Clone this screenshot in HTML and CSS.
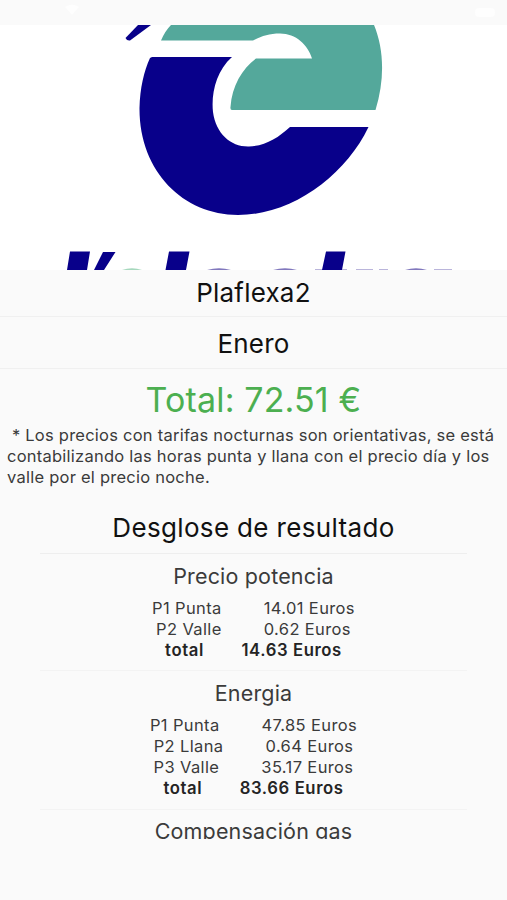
FILE: index.html
```html
<!DOCTYPE html>
<html lang="es">
<head>
<meta charset="utf-8">
<meta name="viewport" content="width=device-width, initial-scale=1">
<title>Plaflexa2</title>
<link rel="stylesheet" href="styles.css">
</head>
<body>
<header class="status-bar">
  <svg width="507" height="25" viewBox="0 0 507 25" fill="#fff" fill-opacity=".7" aria-hidden="true">
    <path d="M65 7q7-5 14 0l-7 8z"/><rect x="475" y="8" width="20" height="9" rx="4"/>
  </svg>
</header>
<main>
  <div class="logo">
    <svg width="507" height="245" viewBox="0 25 507 245" aria-hidden="true">
      <g fill="#08008a">
        <path d="M138 25H151L130 40.500Q127 41 125.500 38Z"/>
        <path d="M152 57H232C216 71 211 94 213 112C216 134 231 147 249 146.500C265 146 278 138 290 127H368.500C345 176 292 215 238 215C183 215 139 171 139.500 108C140 88 144 71 150 58Z"/>
        <path d="M70 251.500H90L87 270H67ZM103 252H115.500L104 270H94ZM169 251.500H189.500L186 270H165.500ZM326 251.500H345.500L342 270H322Z"/>
      </g>
      <g fill="#54a89b">
        <path d="M171 25H374C384 49 385 79 375.500 110H232Q230 110 230.500 107C232 86 242 69 256 58.500H312C308 45 296 33.500 280 33.500C269 33.500 262 36 253 40.500H161Q165 31 171 25Z"/>
      </g>
      <path fill="#a6d8bd" d="M122 270Q132 266.500 142 270Z"/>
      <path fill="#8178bd" d="M207 270Q219 266.500 231 270ZM273 270Q285 266.500 297 270ZM405 270Q416 266.500 427 270Z"/>
      <path stroke="#8178bd" stroke-opacity=".55" d="M315 269.500H322M342 269.500H347M356 269.500H373M379 269.500H388M434 269.500H452"/>
    </svg>
  </div>
  <h1 class="heading name">Plaflexa2</h1>
  <h2 class="heading month">Enero</h2>
  <p class="total">Total: 72.51 €</p>
  <p class="note">&nbsp;* Los precios con tarifas nocturnas son orientativas, se está<br>contabilizando las horas punta y llana con el precio día y los<br>valle por el precio noche.</p>
  <div class="breakdown">
    <h2 class="heading title">Desglose de resultado</h2>
    <section class="group">
      <h3>Precio potencia</h3>
      <div class="row"><span>P1 Punta</span><span>14.01 Euros</span></div>
      <div class="row"><span>P2 Valle</span><span>0.62 Euros</span></div>
      <div class="row sum"><span>total</span><span>14.63 Euros</span></div>
    </section>
    <section class="group energy">
      <h3>Energia</h3>
      <div class="row"><span>P1 Punta</span><span>47.85 Euros</span></div>
      <div class="row"><span>P2 Llana</span><span>0.64 Euros</span></div>
      <div class="row"><span>P3 Valle</span><span>35.17 Euros</span></div>
      <div class="row sum"><span>total</span><span>83.66 Euros</span></div>
    </section>
    <section class="group gas">
      <h3>Compensación gas</h3>
    </section>
  </div>
</main>
</body>
</html>
```
FILE: styles.css
```css
* { box-sizing: border-box; }
body {
  margin: 0;
  height: 900px;
  overflow: hidden;
  background: #fafafa;
  color: #3b3b3b;
  font-family: Inter, "Liberation Sans", sans-serif;
}
h1, h2, h3, p { margin: 0; font-weight: 400; }
svg { display: block; }
.status-bar { height: 25px; }
main { height: 814px; overflow: hidden; }
.logo { height: 245px; background: #fff; }
.heading {
  color: #111;
  font-size: 26px;
  letter-spacing: 0.2px;
  text-align: center;
}
.name, .month { border-bottom: 1px solid #f0f0f0; }
.name { height: 47px; line-height: 45px; }
.month { height: 52px; line-height: 53px; }
.total {
  height: 56px;
  line-height: 62px;
  color: #4caf50;
  font-size: 34px;
  letter-spacing: 0.15px;
  text-align: center;
}
.note {
  padding-left: 7px;
  font-size: 16.5px;
  line-height: 20.8px;
  letter-spacing: 0.24px;
  white-space: nowrap;
}
.breakdown { padding: 16px 40px 0; }
.title {
  height: 51px;
  line-height: 50px;
  letter-spacing: 0.35px;
  border-bottom: 1px solid #eee;
}
.group { height: 117px; border-bottom: 1px solid #f3f3f3; }
.group h3 {
  height: 44px;
  line-height: 44px;
  font-size: 21.5px;
  letter-spacing: 0.17px;
  text-align: center;
}
.row {
  display: flex;
  justify-content: center;
  gap: 42px;
  font-size: 16.5px;
  line-height: 20.8px;
  letter-spacing: 0.37px;
}
.sum { gap: 37.5px; color: #242424; font-weight: 600; font-size: 16.7px; letter-spacing: 0.6px; }
.energy { height: 139px; }
.gas { border: 0; }
.gas h3 { line-height: 43px; }
```
